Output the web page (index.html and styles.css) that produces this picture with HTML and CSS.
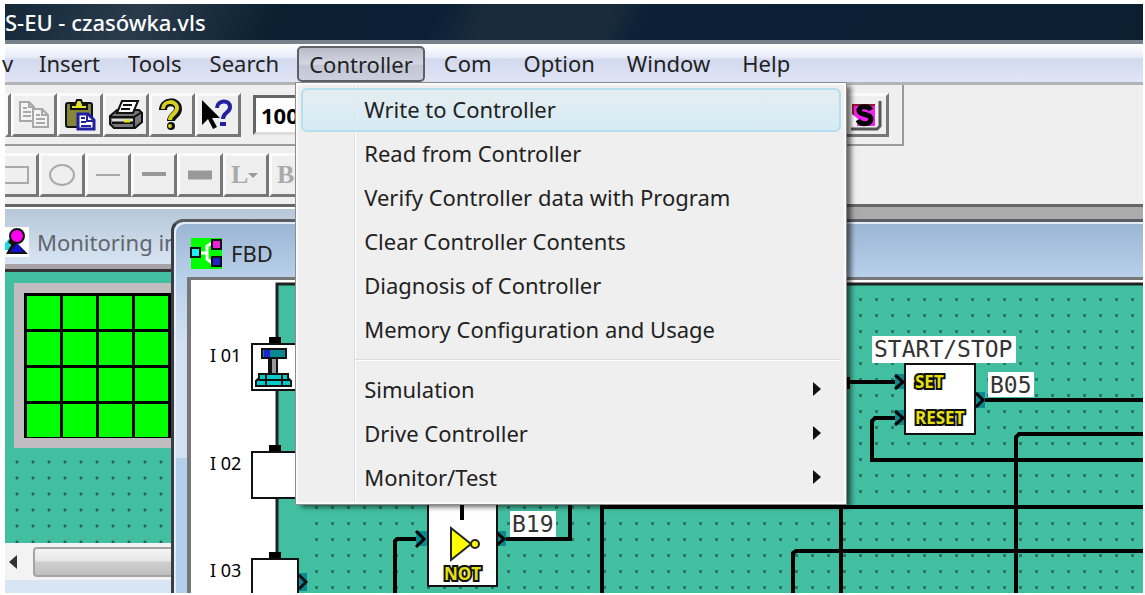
FILE: index.html
```html
<!DOCTYPE html>
<html lang="en">
<head>
    <meta charset="UTF-8">
    <meta name="viewport" content="width=device-width, initial-scale=1.0">
    <title>czasówka.vls</title>
    <link rel="stylesheet" href="styles.css">
</head>
<body>

<div class="app">
    <header class="titlebar"><span>S-EU - czasówka.vls</span></header>

    <!-- menu bar -->
    <nav class="menubar">
        <button class="view" aria-label="View">v</button>
        <button>Insert</button>
        <button>Tools</button>
        <button>Search</button>
        <div class="dropdown">
            <button class="open">Controller</button>
            <div class="menu">
                <button class="active">Write to Controller</button>
                <button>Read from Controller</button>
                <button>Verify Controller data with Program</button>
                <button>Clear Controller Contents</button>
                <button>Diagnosis of Controller</button>
                <button>Memory Configuration and Usage</button>
                <hr>
                <button class="sub">Simulation</button>
                <button class="sub">Drive Controller</button>
                <button class="sub">Monitor/Test</button>
            </div>
        </div>
        <button>Com</button>
        <button>Option</button>
        <button>Window</button>
        <button>Help</button>
    </nav>

    <div class="toolbars">
        <div class="toolbar main">
            <button class="tool cut" aria-label="Cut"></button>
            <button class="tool" aria-label="Copy">
                <svg width="34" height="34" viewBox="0 0 34 34" fill="#f4f4f4" stroke="#a8a8a8" stroke-width="2">
                    <path d="M3 4h9l5 5v14H3z M12 4v5h5 M6 10h4 M6 14h8 M6 18h8"/>
                    <path d="M16 11h9l6 6v12H16z M25 11v6h6 M19 17h4 M19 21h9 M19 25h9"/>
                </svg>
            </button>
            <button class="tool" aria-label="Paste">
                <svg width="34" height="34" viewBox="0 0 34 34">
                    <rect x="3" y="5" width="26" height="24" rx="2" fill="#85853c" stroke="#111" stroke-width="2"/>
                    <path d="M8 11V7h4l2-5h4l2 5h4v4z" fill="#e3df2c" stroke="#111" stroke-width="2"/>
                    <path d="M15 16h10l6 6v9H15z" fill="#fff" stroke="#2020a0" stroke-width="3"/>
                    <path d="M24 16v7h7 M18 20h4 M18 24h5 M18 28h10" fill="none" stroke="#2020a0" stroke-width="2"/>
                </svg>
            </button>
            <button class="tool" aria-label="Print">
                <svg width="36" height="34" viewBox="0 0 36 34" stroke="#111" stroke-width="2">
                    <path d="M2 18l7-6h22l3 3v9l-7 6H6l-4-4z" fill="#777"/>
                    <path d="M9 15l5-12h16l-5 12z" fill="#fff"/>
                    <path d="M15 7h9 M13 11h9" fill="none"/>
                    <path d="M2 19h24l8-5 M4 25h22v5 M26 19v10" fill="none"/>
                    <path d="M4 22h21" stroke="#ddd"/>
                    <path d="M16 23h6" stroke="#e8e020" stroke-width="3"/>
                </svg>
            </button>
            <button class="tool" aria-label="Help">
                <svg width="30" height="34" viewBox="0 0 30 34" fill="none">
                    <path d="M6 12c0-10 15-10 15-1 0 6-7 6-7 12" stroke="#111" stroke-width="8"/>
                    <circle cx="14" cy="28" r="4" fill="#111"/>
                    <path d="M6 11c0-9 14-9 14-1 0 6-7 6-7 12" stroke="#d8d020" stroke-width="4"/>
                    <circle cx="13" cy="28" r="2" fill="#d8d020"/>
                </svg>
            </button>
            <button class="tool" aria-label="Context help">
                <svg width="36" height="34" viewBox="0 0 36 34" fill="none">
                    <path d="M2 2v25l6-6 5 10 4-2-5-9h8z" fill="#000"/>
                    <path d="M17 10c0-8 13-9 13-1 0 6-7 5-7 12" stroke="#2222a0" stroke-width="4"/>
                    <path d="M20 26h6" stroke="#2222a0" stroke-width="4"/>
                </svg>
            </button>
            <input class="zoom" type="text" value="100%" aria-label="Zoom">
            <button class="tool last" aria-label="Stop simulation">
                <svg width="36" height="36" viewBox="0 0 36 36">
                    <rect x="4" y="7" width="23" height="22" fill="#f020f0"/>
                    <path d="M4 8h23 M5 8v14" stroke="#901830" stroke-width="2"/>
                    <path d="M4 29V17l6 5-1 7z" fill="#fff"/>
                    <path d="M23 13c-3-5-13-4-12 1 1 5 12 2 12 8 0 6-11 6-13 1" fill="none" stroke="#000" stroke-width="5"/>
                    <path d="M32 4v25l-3 3H3" fill="none" stroke="#555" stroke-width="3"/>
                </svg>
            </button>
        </div>
        <div class="toolbar draw">
            <button class="tool" aria-label="Rectangle">
                <svg width="30" height="30" viewBox="0 0 30 30"><path d="M0 7h23v16H0" fill="none" stroke="#aaa" stroke-width="2"/></svg>
            </button>
            <button class="tool" aria-label="Ellipse">
                <svg width="30" height="30" viewBox="0 0 30 30"><ellipse cx="15" cy="15" rx="12" ry="10" fill="none" stroke="#aaa" stroke-width="2"/></svg>
            </button>
            <button class="tool" aria-label="Thin line">
                <svg width="30" height="30" viewBox="0 0 30 30"><path d="M3 15h24" stroke="#aaa" stroke-width="2"/></svg>
            </button>
            <button class="tool" aria-label="Medium line">
                <svg width="30" height="30" viewBox="0 0 30 30"><path d="M3 14h24" stroke="#999" stroke-width="4"/></svg>
            </button>
            <button class="tool" aria-label="Thick line">
                <svg width="30" height="30" viewBox="0 0 30 30"><path d="M3 15h24" stroke="#999" stroke-width="9"/></svg>
            </button>
            <button class="tool letter">L<i></i></button>
            <button class="tool letter">B</button>
        </div>
    </div>

    <main class="desktop">
        <!-- Monitoring window -->
        <section class="window monitoring">
            <div class="caption">
                <svg width="24" height="30" viewBox="0 0 24 30">
                    <rect width="24" height="30" fill="#fff"/>
                    <path d="M0 16l5-5v12H0z" fill="#20d8e0"/>
                    <circle cx="12" cy="9" r="7" fill="#f0e" stroke="#111" stroke-width="2"/>
                    <path d="M5 12l-2 3 3 3-5 9h22L12 16z" fill="#111"/>
                    <path d="M12 16l7 9H5z" fill="#11c"/>
                </svg>
                <span>Monitoring in</span>
            </div>
            <div class="panel">
                <div class="lcd"></div>
            </div>
            <div class="scrollbar"><i></i><b></b></div>
        </section>

        <!-- FBD window -->
        <section class="window fbd">
            <div class="caption">
                <svg width="32" height="31" viewBox="0 0 32 31">
                    <rect x="1" width="31" height="31" fill="#0f0"/>
                    <path d="M10 15h6 M22 5l-5 3v13l5 4" fill="none" stroke="#fff" stroke-width="3"/>
                    <rect x="1" y="10" width="9" height="9" fill="#2ee" stroke="#111" stroke-width="2"/>
                    <rect x="22" y="2" width="9" height="9" fill="#e2d" stroke="#111" stroke-width="2"/>
                    <rect x="22" y="19" width="9" height="9" fill="#22c" stroke="#111" stroke-width="2"/>
                </svg>
                <span>FBD</span>
            </div>
            <div class="client">
                <svg class="diagram" width="100%" height="100%">
                    <defs>
                        <pattern id="dots" x="124" y="2" width="16" height="16" patternUnits="userSpaceOnUse">
                            <rect x="0" y="0" width="3" height="3" fill="#2a7867"/>
                        </pattern>
                    </defs>
                    <rect width="100%" height="100%" fill="#fff"/>
                    <rect x="86" y="3" width="100%" height="100%" fill="#42bea0"/>
                    <rect x="118" y="10" width="100%" height="100%" fill="url(#dots)"/>
                    <path d="M86 313V4H2000" fill="none" stroke="#222" stroke-width="3"/>

                    <!-- inputs -->
                    <g class="pin">
                        <text x="19" y="82">I 01</text>
                        <text x="19" y="190">I 02</text>
                        <text x="19" y="297">I 03</text>
                    </g>
                    <path d="M78 57h12v8H78z M78 165h12v8H78z M78 272h12v8H78z"/>
                    <g fill="#fff" stroke="#111" stroke-width="2">
                        <rect x="61" y="64" width="46" height="46"/>
                        <rect x="61" y="172" width="46" height="46"/>
                        <rect x="61" y="279" width="46" height="46"/>
                    </g>
                    <g stroke="#111" stroke-width="2">
                        <rect x="71" y="69" width="24" height="9" fill="#0a8a90"/>
                        <path d="M76 70v7" stroke="#22d" stroke-width="6"/>
                        <path d="M78 78h8v16h-8z" fill="#999"/>
                        <path d="M79 78v16" stroke-width="4"/>
                        <path d="M68 94h29v4l3 3v5H65v-5l3-3z" fill="#0cc"/>
                        <path d="M67 100h32 M75 95v10 M91 95v10"/>
                    </g>
                    <path d="M108 293h8v18h-8z" fill="#0a8a90"/>
                    <path d="M108 295l7 7-7 7" fill="none" stroke="#111" stroke-width="3"/>

                    <!-- wires -->
                    <g fill="none" stroke="#000" stroke-width="4">
                        <path d="M204 313V261L206 259H235"/>
                        <path d="M308 259H379V220"/>
                        <path d="M411 313V227H2000"/>
                        <path d="M650 227V313"/>
                        <path d="M602 313V273L605 271H2000"/>
                        <path d="M657 102H712"/>
                        <path d="M712 138H684L681 141V180H2000"/>
                        <path d="M784 120H2000"/>
                        <path d="M825 313V157L828 154H2000"/>
                    </g>
                    <path d="M655 97h4v12h-4z"/>

                    <!-- NOT block -->
                    <path d="M225 251h11v15h-11z M305 251h10v15h-10z" fill="#0a8a90"/>
                    <path d="M225 251l8 8-8 8 M306 253l7 6-7 6" fill="none" stroke="#000" stroke-width="3"/>
                    <rect x="237" y="214" width="69" height="92" fill="#fff" stroke="#111" stroke-width="2"/>
                    <path d="M271 214V240" stroke="#000" stroke-width="4"/>
                    <path d="M260 248v32l20-16z" fill="#ff0" stroke="#222" stroke-width="2"/>
                    <circle cx="284" cy="264" r="4" fill="#ff0" stroke="#222" stroke-width="2"/>
                    <text class="op" x="253" y="300">NOT</text>
                    <rect x="319" y="231" width="46" height="26" fill="#fff"/>
                    <text class="name" x="321" y="252">B19</text>

                    <!-- START/STOP block -->
                    <path d="M704 94h10v15h-10z M704 130h10v15h-10z M784 112h10v16h-10z" fill="#0a8a90"/>
                    <path d="M704 95l8 7-8 7 M704 131l8 7-8 7 M785 113l7 7-7 7" fill="none" stroke="#000" stroke-width="3"/>
                    <rect x="681" y="56" width="144" height="27" fill="#fff"/>
                    <text class="name" x="683" y="77">START/STOP</text>
                    <rect x="714" y="84" width="70" height="70" fill="#fff" stroke="#111" stroke-width="2"/>
                    <text class="op" x="724" y="108">SET</text>
                    <text class="op" x="724" y="144">RESET</text>
                    <rect x="797" y="92" width="46" height="25" fill="#fff"/>
                    <text class="name" x="799" y="113">B05</text>
                </svg>
            </div>
        </section>
    </main>
</div>

</body>
</html>
```

FILE: styles.css
```css
*{
    box-sizing: border-box;
}

body{
    margin: 0;
    background: #fff;
    font-family: "Noto Sans", "Open Sans", sans-serif;
    font-size: 22px;
    color: #222;
}

button{
    font: inherit;
    color: inherit;
    background: none;
    border: none;
    padding: 0;
}

.app{
    display: flex;
    flex-direction: column;
    height: 100vh;
    padding: 4px 2px 2px 5px;
    overflow: hidden;
}

/* title bar */
.titlebar{
    display: flex;
    align-items: center;
    flex: none;
    height: 36px;
    color: #fff;
    font-weight: 500;
    background: linear-gradient(115deg, #14283a 0%, #2a3c4c 12%, #0c1f31 24%, #0b2036 38%, #1a2b3b 42%, #1a2b3b 53%, #0b2036 56%, #0c1f31 100%);
}

.titlebar span{
    white-space: nowrap;
    padding-bottom: 1px;
}

/* menu bar */
.menubar{
    display: flex;
    flex: none;
    height: 45px;
    border-top: 4px solid #78828c;
    border-bottom: 3px solid #b4b4b4;
    background: linear-gradient(#fff, #e8ecf8 35%, #d3d9ee 40%, #e0e6f6);
}

.menubar > button,
.dropdown > button{
    height: 38px;
    margin: 0 3px;
    padding: 0 11px;
}

.menubar > .view{
    width: 17px;
    padding: 0;
    margin: 0 3px 0 0;
    text-align: left;
    text-indent: -3px;
}

.dropdown{
    position: relative;
    margin-left: 1px;
}

.dropdown > .open{
    padding: 0 10px;
    height: 36px;
    margin-top: 2px;
    border: 2px solid #5c6068;
    border-radius: 5px;
    background: linear-gradient(#b9bcc6, #d4d7e3 50%, #c2c6d4 55%, #ccd0de);
}

.dropdown ~ button{
    padding: 0 13px;
}

.menu{
    position: absolute;
    z-index: 5;
    top: 38px;
    left: 1px;
    width: 552px;
    padding: 5px 5px 4px;
    border: 1px solid #8c8c8c;
    background: linear-gradient(to right, #efefef 58px, #d9dee0 58px, #d9dee0 59px, #fff 59px, #fff 60px, #efefef 60px);
    box-shadow: inset 0 0 0 2px #fafafa, 5px 3px 5px -1px rgba(0, 0, 0, 0.6);
}

.menu button{
    display: flex;
    align-items: center;
    width: 100%;
    height: 44px;
    padding: 0 18px 3px 61px;
    border: 2px solid transparent;
    border-radius: 6px;
    white-space: nowrap;
}

.menu .active{
    border-color: #b4dfee;
    background: linear-gradient(rgba(222, 236, 242, 0.6), rgba(208, 234, 246, 0.8));
}

.menu .sub::after{
    content: "";
    margin-left: auto;
    border: 7px solid transparent;
    border-left: 8px solid #111;
    border-right: none;
}

.menu hr{
    height: 2px;
    margin: 7px 0 7px 54px;
    border: none;
    border-top: 1px solid #dcdcdc;
    background: #fff;
}

/* toolbars */
.toolbars{
    flex: none;
    height: 119px;
    background: #efefef;
    overflow: hidden;
}

.toolbar{
    display: flex;
    align-items: center;
}

.main{
    width: 79%;
    height: 61px;
    border-right: 2px solid #999;
    border-bottom: 2px solid #999;
}

.draw{
    height: 58px;
}

.tool{
    display: flex;
    align-items: center;
    justify-content: center;
    flex: none;
    width: 46px;
    height: 44px;
    border: 3px solid;
    border-color: #fafafa #777 #777 #fafafa;
}

.cut{
    width: 6px;
}

.draw .tool:first-child{
    width: 34px;
    justify-content: flex-start;
    border-left: none;
}

.letter{
    justify-content: flex-start;
    padding-left: 5px;
    font-family: "Liberation Serif", serif;
    font-size: 26px;
    font-weight: bold;
    color: #aaa;
}

.letter i{
    border: 5px solid transparent;
    border-top-color: #999;
    border-bottom: none;
}

.zoom{
    width: 130px;
    height: 40px;
    margin-left: 12px;
    padding: 0 5px;
    border: 3px solid;
    border-color: #666 #ddd #ddd #666;
    font: bold 22px "Open Sans", sans-serif;
}

.last{
    margin-left: auto;
    margin-right: 13px;
}

/* mdi desktop */
.desktop{
    position: relative;
    flex: 1;
    overflow: hidden;
    border-top: 3px solid #666;
    background: #ababab;
}

.window{
    position: absolute;
    bottom: 0;
    display: flex;
    flex-direction: column;
}

.caption{
    display: flex;
    align-items: center;
    flex: none;
    white-space: nowrap;
}

.monitoring{
    top: 0;
    left: 0;
    width: 400px;
    border-top: 2px solid #fff;
    background: #d8e5f3;
}

.monitoring .caption{
    height: 60px;
    gap: 8px;
    padding-top: 10px;
    border-bottom: 5px solid #a9a3a9;
    color: #60666e;
    background: linear-gradient(#b6c7d8, #d8e5f3);
}

.panel{
    flex: 1;
    padding: 11px 0 0 9px;
    border-top: 3px solid #333;
    background: radial-gradient(circle at 8px 8px, #22695a 1px, transparent 2px) 4px 6px / 16px 16px #42bea0;
}

.lcd{
    height: 165px;
    border: 10px solid #c0bcc0;
    background: repeating-linear-gradient(#000 0, #000 3px, transparent 3px, transparent 36px) 0 0 / 100% 144px, repeating-linear-gradient(to right, #000 0, #000 3px, #0f0 3px, #0f0 36px);
    outline: 11px solid #42bea0;
}

.scrollbar{
    position: relative;
    display: flex;
    align-items: center;
    flex: none;
    height: 37px;
    margin-bottom: 13px;
    background: #f3f3f3;
}

.scrollbar i{
    margin: 0 16px 0 4px;
    border: 7px solid transparent;
    border-right: 8px solid #333;
    border-left: none;
}

.scrollbar b{
    flex: 1;
    height: 30px;
    border: 2px solid #a4a4a4;
    border-radius: 4px;
    background: linear-gradient(#f4f4f4, #e6e6e6 45%, #cfcfcf 50%, #c0c0c0);
}

.fbd{
    top: 12px;
    left: 166px;
    right: 0;
    padding-left: 13px;
    border-top: 3px solid #5a5e62;
    border-left: 3px solid #3a3e42;
    border-top-left-radius: 12px;
    background: linear-gradient(#9ab5d3, #b9d0ea 56px, #d2e0f1 120px, #d2e0f1 236px, #b4cfe9 236px);
    box-shadow: inset 2px 2px 0 #e4edf6;
}

.fbd .caption{
    height: 55px;
    gap: 9px;
    padding: 7px 0 0 3px;
}

.client{
    flex: 1;
    min-height: 0;
    border-top: 3px solid #777;
    border-left: 4px solid #777;
}

.diagram{
    display: block;
}

.pin{
    font-size: 18px;
}

.name{
    font-family: "DejaVu Sans Mono", monospace;
    font-size: 23px;
    fill: #333;
}

.op{
    font-family: "Open Sans", sans-serif;
    font-weight: bold;
    font-size: 17px;
    fill: #e6e010;
    stroke: #111;
    stroke-width: 4px;
    paint-order: stroke;
}
```
